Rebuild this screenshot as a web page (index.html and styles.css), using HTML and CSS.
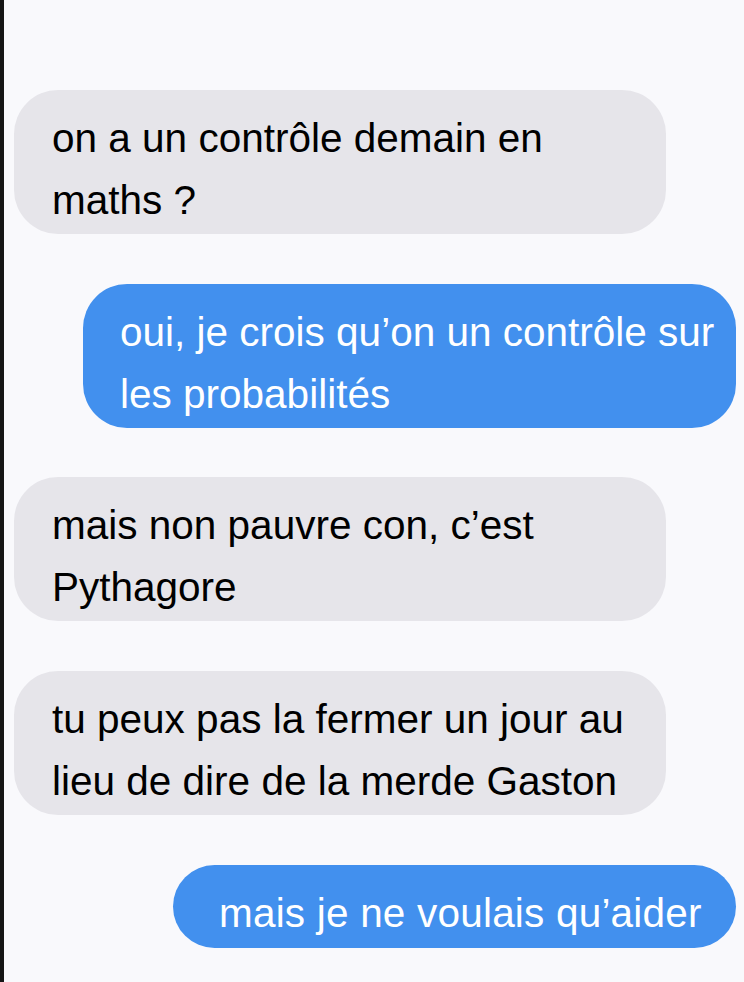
FILE: index.html
```html
<!DOCTYPE html>
<html lang="fr">
<head>
<meta charset="utf-8">
<link rel="stylesheet" href="styles.css">
</head>
<body>
<div class="edge"></div>
<main class="thread">
  <div class="bubble in">on a un contrôle demain en<br>maths ?</div>
  <div class="bubble out">oui, je crois qu’on un contrôle sur<br>les probabilités</div>
  <div class="bubble in">mais non pauvre con, c’est<br>Pythagore</div>
  <div class="bubble in">tu peux pas la fermer un jour au<br>lieu de dire de la merde Gaston</div>
  <div class="bubble out short">mais je ne voulais qu’aider</div>
</main>
</body>
</html>
```
FILE: styles.css
```css
html, body {
  margin: 0;
  padding: 0;
  background: #f9f9fc;
  height: 100%;
}
body {
  display: flex;
  font-family: "Liberation Sans", Arial, sans-serif;
  overflow: hidden;
}
.edge {
  width: 4px;
  flex: none;
  background: #151515;
}
.thread {
  flex: 1;
  display: flex;
  flex-direction: column;
  gap: 49.7px;
  padding: 90px 8px 0 10px;
}
.bubble {
  box-sizing: border-box;
  width: 652px;
  border-radius: 44px;
  font-size: 40.5px;
  line-height: 62px;
  padding: 17px 0 3px 38px;
  white-space: nowrap;
}
.in {
  align-self: flex-start;
  background: #e6e5ea;
  color: #000;
}
.out {
  align-self: flex-end;
  background: #4290ee;
  color: #fff;
  padding-left: 37px;
  width: 653px;
}
.out.short {
  width: 563px;
  padding-left: 46px;
  padding-bottom: 4px;
  letter-spacing: 0.2px;
}
```
